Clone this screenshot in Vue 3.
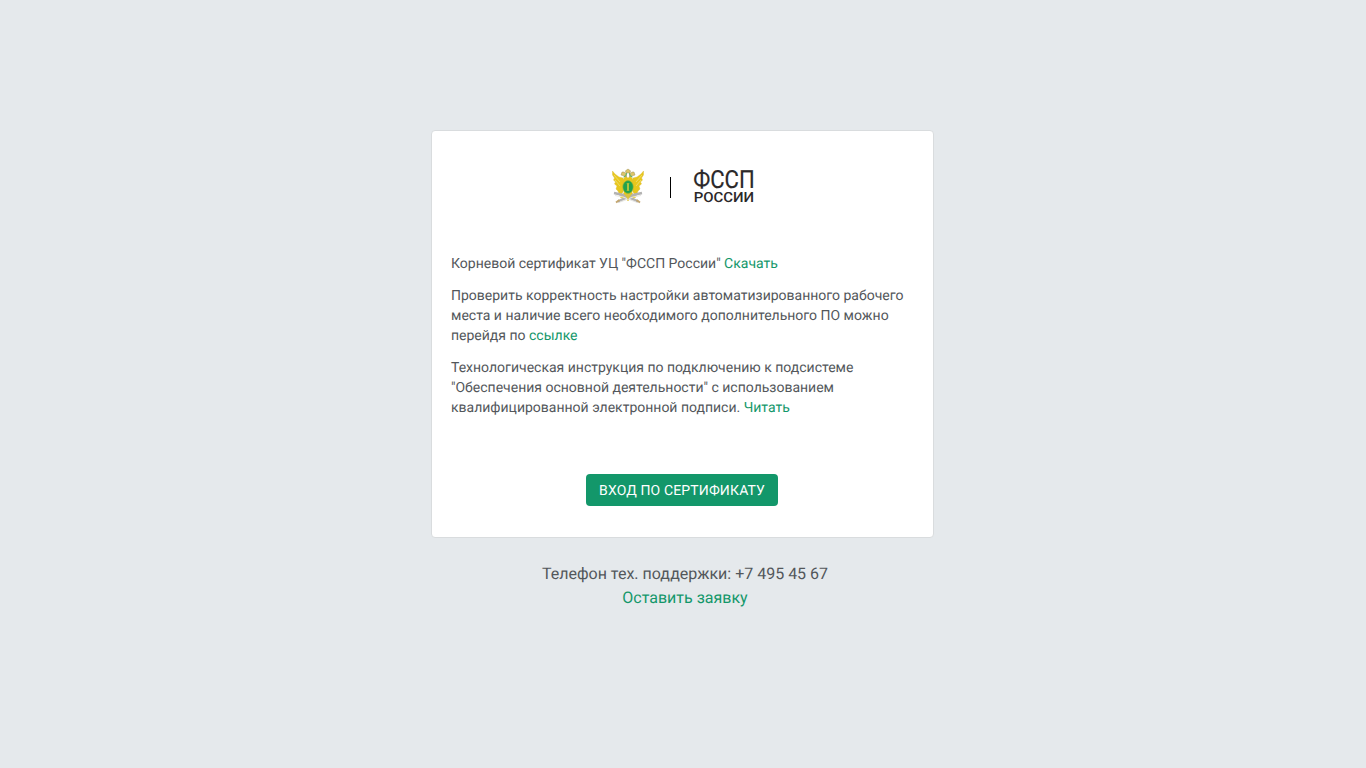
<script setup>
const phone = '+7 495 45 67'
</script>

<template>
  <main class="page">
    <section class="card">
      <header class="brand">
        <svg class="emblem" viewBox="0 0 34 36" width="34" height="36" aria-hidden="true">
          <g fill="#e8c71c" stroke="#d8b838" stroke-width="0.4">
            <path d="M1.500 3 4 6 8 9 12 10 14 14 12 24 9 28 7 23 5 21 6 18 3.500 16 4.500 14 2.500 12 3.500 10 1.500 7Z" />
            <path d="M32.500 3 30 6 26 9 22 10 20 14 22 24 25 28 27 23 29 21 28 18 30.500 16 29.500 14 31.500 12 30.500 10 32.500 7Z" />
            <path d="M14 8 17 10 20 8 22 13 21 25 25 29 22 31 20 29 17 33 14 29 12 31 9 29 13 25 12 13Z" />
          </g>
          <g stroke="#f5e795" stroke-width="0.6" fill="none">
            <path d="M3 7 9 14M4 12 9 18M31 7 25 14M30 12 25 18" />
          </g>
          <g stroke="#b3b2b1" stroke-width="2.500" fill="none">
            <path d="M3 25 12 27 27 33.500" />
            <path d="M31 25 22 27 7 33.500" />
          </g>
          <g stroke="#e6e6e3" stroke-width="1.200" fill="none">
            <path d="M4 27.500 12 29 25 34M30 27.500 22 29 9 34" />
          </g>
          <g stroke="#c3a670" stroke-width="2" fill="none">
            <path d="M25.500 32 29 34.500M8.500 32 5 34.500" />
          </g>
          <path d="M13 26 17 31.500 21 26Z" fill="#dbc23d" />
          <g fill="#ddc567" stroke="#9e925f" stroke-width="0.5">
            <path d="M15 5 14.500 2.800 17 1 19.500 2.800 19 5Z" />
            <path d="M13.500 8 10 7 11 4 13 4 15.500 6 15.500 9ZM20.500 8 24 7 23 4 21 4 18.500 6 18.500 9Z" />
          </g>
          <path d="M12.500 9Q15.500 8.500 15.500 5M21.500 9Q18.500 8.500 18.500 5" stroke="#55b36c" fill="none" />
          <ellipse cx="17" cy="19" rx="5.200" ry="6.400" fill="#21a14c" stroke="#8eb43a" stroke-width="0.6" />
          <path d="M17 15.500V22.500" stroke="#d8d03b" stroke-width="1.500" />
          <path d="M15.700 15.500H18.300M15.700 22.500H18.300" stroke="#b9c33a" stroke-width="0.700" />
        </svg>
        <span class="divider"></span>
        <svg class="wordmark" viewBox="0 0 62 36" width="62" height="36">
          <text class="name" x="0.200" y="20" textLength="61.500" lengthAdjust="spacingAndGlyphs">ФССП</text>
          <text class="country" x="0.700" y="34" textLength="60.500" lengthAdjust="spacingAndGlyphs">РОССИИ</text>
        </svg>
      </header>
      <div class="info">
        <p>Корневой сертификат УЦ "ФССП России" <a>Скачать</a></p>
        <p>Проверить корректность настройки автоматизированного рабочего места и наличие всего необходимого дополнительного ПО можно перейдя по <a>ссылке</a></p>
        <p>Технологическая инструкция по подключению к подсистеме "Обеспечения основной деятельности" с использованием квалифицированной электронной подписи. <a>Читать</a></p>
      </div>
      <button class="login" type="button">ВХОД ПО СЕРТИФИКАТУ</button>
    </section>
    <footer class="support">
      <div>Телефон тех. поддержки: {{ phone }}</div>
      <a>Оставить заявку</a>
    </footer>
  </main>
</template>

<style>
body {
  background: #e5e9ec;
}
</style>

<style scoped>
.page {
  box-sizing: border-box;
  height: 768px;
  padding: 130px 0 0 431px;
  background: #e5e9ec;
  color: #53575b;
  font-family: Roboto, sans-serif;
  text-rendering: geometricPrecision;
}
.card {
  box-sizing: border-box;
  width: 503px;
  height: 408px;
  border: 1px solid #d9dcde;
  border-radius: 4px;
  background: #fff;
  padding: 37px 19px 0;
}
.brand {
  display: flex;
  align-items: flex-start;
  height: 36px;
  margin-left: 160px;
}
.emblem,
.wordmark {
  display: block;
  flex: none;
}
.divider {
  width: 1px;
  height: 21px;
  margin: 9px 22px 0 25px;
  background: #000;
}
.wordmark {
  overflow: visible;
  fill: #2b2829;
}
.name {
  font-size: 25px;
  stroke: #2b2829;
  stroke-width: 0.2px;
}
.country {
  font-size: 14px;
  font-weight: 500;
}
.info {
  margin-top: 50px;
  font-size: 14px;
  line-height: 20px;
}
.info p {
  margin: 0 0 12px;
}
a {
  color: #13976a;
}
.login {
  box-sizing: border-box;
  display: block;
  width: 192px;
  height: 32px;
  margin: 56px 0 0 135px;
  padding: 2px 0 0;
  border: 0;
  border-radius: 4px;
  background: #13976a;
  color: #fff;
  font: 14px/30px Roboto, sans-serif;
  letter-spacing: 0.14px;
  text-rendering: geometricPrecision;
}
.support {
  width: 508px;
  margin-top: 24px;
  text-align: center;
  font-size: 16px;
  line-height: 24px;
}
</style>
